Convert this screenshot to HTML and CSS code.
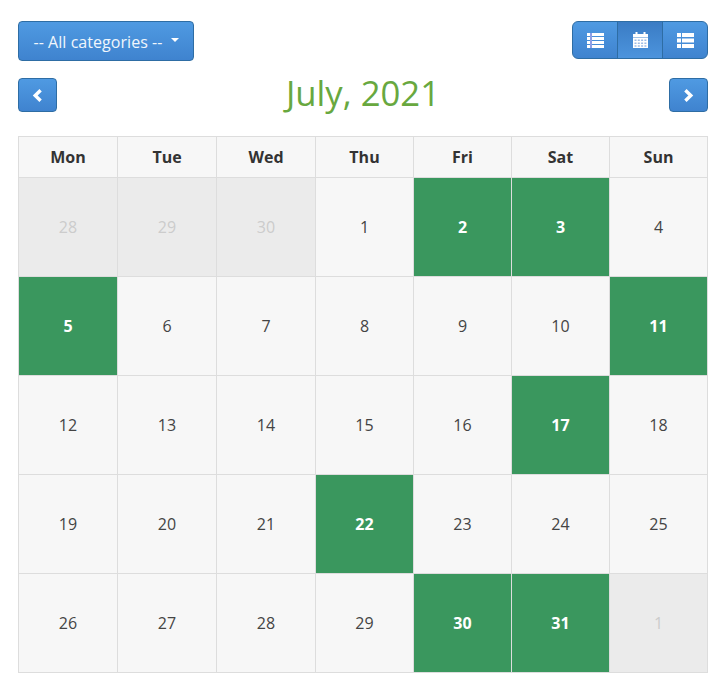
FILE: index.html
```html
<!DOCTYPE html>
<html lang="en">
<head>
<meta charset="utf-8">
<title>Calendar</title>
<link rel="stylesheet" href="styles.css">
</head>
<body>
<div class="toolbar">
  <button class="btn btn-cat" type="button"><span class="cat-label">-- All categories --</span><span class="caret"></span></button>
  <div class="btn-group">
    <button class="btn btn-view" type="button" aria-label="List">
      <svg width="17" height="15" viewBox="0 0 17 15"><path fill="#fff" d="M0 0h17v3H0zM0 4h17v3H0zM0 8h17v3H0zM0 12h17v3H0z"/><path fill="#8f9fe6" d="M3 0h2v15H3z"/></svg>
    </button>
    <button class="btn btn-view active" type="button" aria-label="Calendar">
      <svg width="15" height="16" viewBox="0 0 15 16"><path fill="#fff" d="M0 2h2.5V0h2v2h6V0h2v2H15v3.4H0zM0 6h15v10H0z"/><path fill="#9dbce6" d="M1.5 7.5h2V9h-2zM4.8 7.5h2V9h-2zM8.1 7.5h2V9h-2zM11.4 7.5h2V9h-2zM1.5 10.5h2V12h-2zM4.8 10.5h2V12h-2zM8.1 10.5h2V12h-2zM11.4 10.5h2V12h-2zM1.5 13.3h2v1.5h-2zM4.8 13.3h2v1.5h-2zM8.1 13.3h2v1.5h-2zM11.4 13.3h2v1.5h-2z"/></svg>
    </button>
    <button class="btn btn-view" type="button" aria-label="Agenda">
      <svg width="17" height="15" viewBox="0 0 17 15"><path fill="#fff" d="M0 0h4v4H0zM5 0h12v4H5zM0 5.5h4v4H0zM5 5.5h12v4H5zM0 11h4v4H0zM5 11h12v4H5z"/></svg>
    </button>
  </div>
</div>
<div class="nav">
  <button class="btn btn-arrow" type="button" aria-label="Previous">
    <svg width="11" height="13" viewBox="0 0 11 13"><path fill="none" stroke="#fff" stroke-width="3.4" d="M8.6 1.2 3.2 6.5l5.4 5.3"/></svg>
  </button>
  <h1 class="title">July, 2021</h1>
  <button class="btn btn-arrow" type="button" aria-label="Next">
    <svg width="11" height="13" viewBox="0 0 11 13"><path fill="none" stroke="#fff" stroke-width="3.4" d="M2.4 1.2l5.4 5.3-5.4 5.3"/></svg>
  </button>
</div>
<table class="cal">
  <colgroup><col class="c99"><col class="c99"><col class="c99"><col class="c98"><col class="c98"><col class="c98"><col class="c98"></colgroup>
  <thead><tr><th>Mon</th><th>Tue</th><th>Wed</th><th>Thu</th><th>Fri</th><th>Sat</th><th>Sun</th></tr></thead>
  <tbody>
    <tr><td class="off">28</td><td class="off">29</td><td class="off">30</td><td>1</td><td class="ev">2</td><td class="ev">3</td><td>4</td></tr>
    <tr><td class="ev">5</td><td>6</td><td>7</td><td>8</td><td>9</td><td>10</td><td class="ev">11</td></tr>
    <tr><td>12</td><td>13</td><td>14</td><td>15</td><td>16</td><td class="ev">17</td><td>18</td></tr>
    <tr><td>19</td><td>20</td><td>21</td><td class="ev">22</td><td>23</td><td>24</td><td>25</td></tr>
    <tr><td>26</td><td>27</td><td>28</td><td>29</td><td class="ev">30</td><td class="ev">31</td><td class="off">1</td></tr>
  </tbody>
</table>
</body>
</html>
```
FILE: styles.css
```css
* { box-sizing: border-box; }
html, body { margin: 0; background: #fff; }
body {
  padding: 21px 19px 0 18px;
  font-family: "Open Sans", sans-serif;
  font-size: 16px;
  color: #333;
}
.toolbar {
  display: flex;
  justify-content: space-between;
  align-items: flex-start;
  height: 57px;
}
.btn {
  display: inline-flex;
  align-items: center;
  justify-content: center;
  margin: 0;
  padding: 0;
  border: 1px solid #2e6da4;
  border-radius: 4px;
  background: linear-gradient(#4f9ae2, #3f83cf);
  color: #fff;
  font: inherit;
}
.btn-cat {
  width: 176px;
  height: 40px;
  gap: 8px;
  color: #f0f6fc;
}
.cat-label {
  padding-top: 2px;
  letter-spacing: 0.05px;
}
.caret {
  width: 0;
  height: 0;
  border-left: 4.5px solid transparent;
  border-right: 4.5px solid transparent;
  border-top: 4.5px solid #fff;
  margin-top: -2px;
}
.btn-group { display: flex; }
.btn-view {
  width: 46px;
  height: 38px;
  border-radius: 0;
  margin-left: -1px;
}
.btn-view:first-child {
  margin-left: 0;
  border-radius: 6px 0 0 6px;
}
.btn-view:last-child { border-radius: 0 6px 6px 0; }
.btn-view.active {
  background: linear-gradient(#3a7cc4, #4c94dd);
  position: relative;
}
.nav {
  display: flex;
  justify-content: space-between;
  align-items: flex-start;
  height: 58px;
}
.btn-arrow {
  width: 39px;
  height: 34px;
}
.title {
  flex: 1;
  margin: 0;
  text-align: center;
  font-size: 34.7px;
  line-height: 30px;
  font-weight: 400;
  color: #68a83f;
}
.cal {
  width: 690px;
  table-layout: fixed;
  border-collapse: collapse;
}
.c99 { width: 99px; }
.c98 { width: 98px; }
.cal th, .cal td {
  border: 1px solid #ddd;
  background: #f7f7f7;
  text-align: center;
  padding: 0;
}
.cal th {
  height: 41px;
  font-size: 16px;
  font-weight: 700;
}
.cal td {
  height: 99px;
  font-size: 16px;
  color: #444;
}
.cal td.off { background: #ebebeb; color: #ccc; }
.cal td.ev { background: #3a975e; color: #fff; font-weight: 700; }
```
